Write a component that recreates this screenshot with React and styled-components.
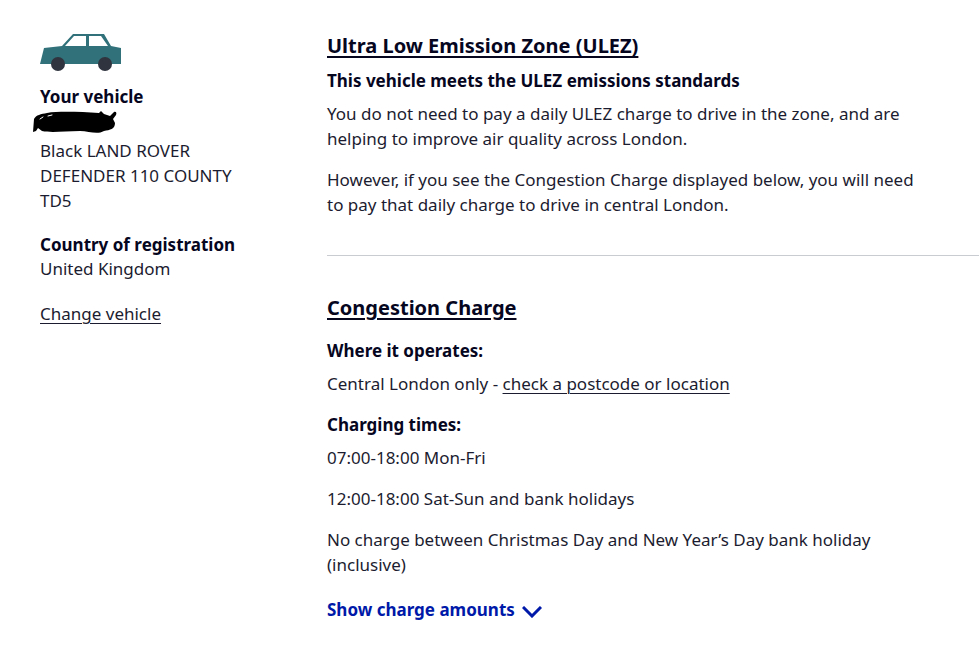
import React from "react";
import styled, { createGlobalStyle } from "styled-components";

const GlobalStyle = createGlobalStyle`
  * { box-sizing: border-box; }
  body {
    margin: 0;
    background: #fff;
    color: #1c1c30;
    font-family: "Noto Sans", sans-serif;
    font-size: 17px;
    line-height: 25px;
    font-variant-ligatures: none;
  }
`;

const Page = styled.div`
  display: grid;
  grid-template-columns: 220px minmax(0, 1fr);
  column-gap: 67px;
  padding: 32px 0 28px 40px;
`;

const Vehicle = styled.aside``;

const CarIcon = styled.svg`
  display: block;
  width: 82px;
  height: 40px;
  margin-bottom: 13px;
`;

const Label = styled.h3`
  margin: 0;
  color: #06061f;
  font-size: 17px;
  line-height: 23px;
  font-weight: 700;
`;

const Redaction = styled.svg`
  display: block;
  width: 86px;
  height: 25px;
  margin: 2px 0 3px -7px;
`;

const Detail = styled.p`
  margin: 0 0 20px;
`;

const TextLink = styled.a`
  color: inherit;
  text-decoration: underline;
  text-decoration-thickness: 1px;
  text-underline-offset: 3px;
`;

const Charges = styled.main``;

const Charge = styled.section`
  & + & {
    margin-top: 38px;
    padding-top: 38px;
    border-top: 1px solid #c9cdd1;
  }
`;

const ChargeTitle = styled.h2`
  margin: 0 0 ${(p) => (p.$spaced ? "16px" : "8px")};
  font-size: 20px;
  line-height: 28px;
  font-weight: 700;
  color: #06061f;

  a {
    text-decoration-thickness: 2px;
  }
`;

const Subtitle = styled(Label)`
  margin-bottom: 8px;
  line-height: 25px;
`;

const Copy = styled.p`
  margin: 0 48px ${(p) => (p.$last ? "0" : "16px")} 0;
`;

const Toggle = styled.button`
  display: flex;
  align-items: center;
  gap: 7px;
  margin-top: 20px;
  padding: 0;
  border: 0;
  background: none;
  color: #0019a8;
  font: inherit;
  font-weight: 700;
  cursor: pointer;
`;

const Chevron = styled.svg`
  width: 20px;
  height: 12px;
  margin-top: 4px;
`;

export default function App() {
  return (
    <>
      <GlobalStyle />
      <Page>
        <Vehicle>
          <CarIcon viewBox="0 0 82 40" aria-hidden="true">
            <path
              fill="#30717a"
              fillRule="evenodd"
              d="M33 2H64L71 14L81 16V32H0L4 16L22 14Z M34 4L25 14H46V4Z M49 4V14H68L61 4Z"
            />
            <circle cx="18" cy="32" r="7" fill="#30343f" />
            <circle cx="65" cy="32" r="7" fill="#30343f" />
          </CarIcon>
          <Label>Your vehicle</Label>
          <Redaction viewBox="0 0 86 25" role="img" aria-label="Registration hidden">
            <path
              d="M1 9C3 5 8 4 14 3C26 1 48 2 66 3L68 1L71 4L77 6L81 2C83 1 84 3 83 5L80 9L82 13C82 19 77 20 71 21C64 25 56 21 47 21C31 21 19 23 9 21L5 18L3 21L0 22Z"
              fill="#000"
            />
            <path d="M7 9L10 7M15 6L19 5" stroke="#fff" strokeWidth="1" strokeLinecap="round" />
          </Redaction>
          <Detail>Black LAND ROVER DEFENDER 110 COUNTY TD5</Detail>
          <Label>Country of registration</Label>
          <Detail>United Kingdom</Detail>
          <TextLink href="#vehicle">Change vehicle</TextLink>
        </Vehicle>
        <Charges>
          <Charge>
            <ChargeTitle>
              <TextLink href="#ulez">Ultra Low Emission Zone (ULEZ)</TextLink>
            </ChargeTitle>
            <Subtitle>This vehicle meets the ULEZ emissions standards</Subtitle>
            <Copy>
              You do not need to pay a daily ULEZ charge to drive in the zone, and are helping to
              improve air quality across London.
            </Copy>
            <Copy $last>
              However, if you see the Congestion Charge displayed below, you will need to pay that
              daily charge to drive in central London.
            </Copy>
          </Charge>
          <Charge>
            <ChargeTitle $spaced>
              <TextLink href="#congestion">Congestion Charge</TextLink>
            </ChargeTitle>
            <Subtitle>Where it operates:</Subtitle>
            <Copy>
              Central London only - <TextLink href="#postcode">check a postcode or location</TextLink>
            </Copy>
            <Subtitle>Charging times:</Subtitle>
            <Copy>07:00-18:00 Mon-Fri</Copy>
            <Copy>12:00-18:00 Sat-Sun and bank holidays</Copy>
            <Copy $last>
              No charge between Christmas Day and New Year’s Day bank holiday (inclusive)
            </Copy>
            <Toggle type="button" aria-expanded="false">
              Show charge amounts
              <Chevron viewBox="0 0 20 12" aria-hidden="true">
                <path d="M1 1L10 10L19 1" fill="none" stroke="#0019a8" strokeWidth="3" />
              </Chevron>
            </Toggle>
          </Charge>
        </Charges>
      </Page>
    </>
  );
}
